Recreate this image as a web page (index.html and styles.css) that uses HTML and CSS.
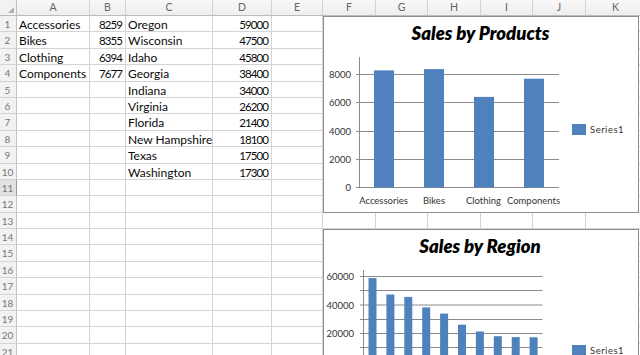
FILE: index.html
```html
<!DOCTYPE html>
<html>
<head>
<meta charset="utf-8">
<link rel="stylesheet" href="styles.css">
</head>
<body>
<div class="sheet">
  <div class="grid">
    <span class="corner"></span><span class="ch">A</span><span class="ch">B</span><span class="ch">C</span><span class="ch">D</span><span class="ch">E</span><span class="ch">F</span><span class="ch">G</span><span class="ch">H</span><span class="ch">I</span><span class="ch">J</span><span class="ch">K</span>
    <span class="rh">1</span><span>Accessories</span><span class="n">8259</span><span>Oregon</span><span class="n">59000</span><span></span><span></span><span></span><span></span><span></span><span></span><span></span>
    <span class="rh">2</span><span>Bikes</span><span class="n">8355</span><span>Wisconsin</span><span class="n">47500</span><span></span><span></span><span></span><span></span><span></span><span></span><span></span>
    <span class="rh">3</span><span>Clothing</span><span class="n">6394</span><span>Idaho</span><span class="n">45800</span><span></span><span></span><span></span><span></span><span></span><span></span><span></span>
    <span class="rh">4</span><span>Components</span><span class="n">7677</span><span>Georgia</span><span class="n">38400</span><span></span><span></span><span></span><span></span><span></span><span></span><span></span>
    <span class="rh">5</span><span></span><span></span><span>Indiana</span><span class="n">34000</span><span></span><span></span><span></span><span></span><span></span><span></span><span></span>
    <span class="rh">6</span><span></span><span></span><span>Virginia</span><span class="n">26200</span><span></span><span></span><span></span><span></span><span></span><span></span><span></span>
    <span class="rh">7</span><span></span><span></span><span>Florida</span><span class="n">21400</span><span></span><span></span><span></span><span></span><span></span><span></span><span></span>
    <span class="rh">8</span><span></span><span></span><span>New Hampshire</span><span class="n">18100</span><span></span><span></span><span></span><span></span><span></span><span></span><span></span>
    <span class="rh">9</span><span></span><span></span><span>Texas</span><span class="n">17500</span><span></span><span></span><span></span><span></span><span></span><span></span><span></span>
    <span class="rh">10</span><span></span><span></span><span>Washington</span><span class="n">17300</span><span></span><span></span><span></span><span></span><span></span><span></span><span></span>
    <span class="rh sel">11</span><span></span><span></span><span></span><span></span><span></span><span></span><span></span><span></span><span></span><span></span><span></span>
    <span class="rh">12</span><span></span><span></span><span></span><span></span><span></span><span></span><span></span><span></span><span></span><span></span><span></span>
    <span class="rh">13</span><span></span><span></span><span></span><span></span><span></span><span></span><span></span><span></span><span></span><span></span><span></span>
    <span class="rh">14</span><span></span><span></span><span></span><span></span><span></span><span></span><span></span><span></span><span></span><span></span><span></span>
    <span class="rh">15</span><span></span><span></span><span></span><span></span><span></span><span></span><span></span><span></span><span></span><span></span><span></span>
    <span class="rh">16</span><span></span><span></span><span></span><span></span><span></span><span></span><span></span><span></span><span></span><span></span><span></span>
    <span class="rh">17</span><span></span><span></span><span></span><span></span><span></span><span></span><span></span><span></span><span></span><span></span><span></span>
    <span class="rh">18</span><span></span><span></span><span></span><span></span><span></span><span></span><span></span><span></span><span></span><span></span><span></span>
    <span class="rh">19</span><span></span><span></span><span></span><span></span><span></span><span></span><span></span><span></span><span></span><span></span><span></span>
    <span class="rh">20</span><span></span><span></span><span></span><span></span><span></span><span></span><span></span><span></span><span></span><span></span><span></span>
    <span class="rh">21</span><span></span><span></span><span></span><span></span><span></span><span></span><span></span><span></span><span></span><span></span><span></span>
  </div>

  <div class="chart chart-products">
    <svg width="314" height="195" viewBox="1 1 314 195">
      <text class="title" x="157.5" y="23.5" text-anchor="middle">Sales by Products</text>
      <g class="gl">
        <line x1="36" y1="58.5" x2="236" y2="58.5"/>
        <line x1="36" y1="86.5" x2="236" y2="86.5"/>
        <line x1="36" y1="115.5" x2="236" y2="115.5"/>
        <line x1="36" y1="143.5" x2="236" y2="143.5"/>
        <line x1="33" y1="171.5" x2="236" y2="171.5"/>
        <line x1="36.5" y1="41" x2="36.5" y2="172"/>
        <line x1="33" y1="58.5" x2="36" y2="58.5"/>
        <line x1="33" y1="86.5" x2="36" y2="86.5"/>
        <line x1="33" y1="115.5" x2="36" y2="115.5"/>
        <line x1="33" y1="143.5" x2="36" y2="143.5"/>
      </g>
      <g class="bar">
        <rect x="51" y="54.4" width="20" height="117.1"/>
        <rect x="101" y="53.1" width="20" height="118.4"/>
        <rect x="151" y="80.9" width="20" height="90.6"/>
        <rect x="201" y="62.7" width="20" height="108.8"/>
      </g>
      <g class="ax" text-anchor="end">
        <text x="28" y="62">8000</text>
        <text x="28" y="90">6000</text>
        <text x="28" y="119">4000</text>
        <text x="28" y="147">2000</text>
        <text x="28" y="175">0</text>
      </g>
      <g class="ax" text-anchor="middle">
        <text x="60.5" y="187.5">Accessories</text>
        <text x="111" y="187.5">Bikes</text>
        <text x="160.5" y="187.5">Clothing</text>
        <text x="210.5" y="187.5">Components</text>
      </g>
      <rect class="bar" x="249" y="108" width="14" height="11"/>
      <text class="ax legend" x="267" y="116.5">Series1</text>
    </svg>
  </div>

  <div class="chart chart-region">
    <svg width="314" height="138" viewBox="1 1 314 138">
      <text class="title" x="157" y="23.5" text-anchor="middle">Sales by Region</text>
      <g class="gl">
        <line x1="40" y1="47.5" x2="219.5" y2="47.5"/>
        <line x1="40" y1="61.5" x2="219.5" y2="61.5"/>
        <line x1="40" y1="76" x2="219.5" y2="76"/>
        <line x1="40" y1="90.5" x2="219.5" y2="90.5"/>
        <line x1="40" y1="104.5" x2="219.5" y2="104.5"/>
        <line x1="40" y1="118.5" x2="219.5" y2="118.5"/>
        <line x1="37" y1="132.5" x2="219.5" y2="132.5"/>
        <line x1="40.5" y1="41" x2="40.5" y2="140"/>
        <line x1="37" y1="47.5" x2="40" y2="47.5"/>
        <line x1="37" y1="61.5" x2="40" y2="61.5"/>
        <line x1="37" y1="76" x2="40" y2="76"/>
        <line x1="37" y1="90.5" x2="40" y2="90.5"/>
        <line x1="37" y1="104.5" x2="40" y2="104.5"/>
        <line x1="37" y1="118.5" x2="40" y2="118.5"/>
      </g>
      <g class="bar">
        <rect x="45.5" y="49.1" width="8" height="90"/>
        <rect x="63.4" y="65.5" width="8" height="80"/>
        <rect x="81.3" y="67.9" width="8" height="80"/>
        <rect x="99.2" y="78.4" width="8" height="70"/>
        <rect x="117.1" y="84.6" width="8" height="60"/>
        <rect x="135" y="95.7" width="8" height="50"/>
        <rect x="152.9" y="102.5" width="8" height="40"/>
        <rect x="170.8" y="107.2" width="8" height="40"/>
        <rect x="188.7" y="108.1" width="8" height="40"/>
        <rect x="206.6" y="108.3" width="8" height="40"/>
      </g>
      <g class="ax" text-anchor="end">
        <text x="31" y="51">60000</text>
        <text x="31" y="79.5">40000</text>
        <text x="31" y="108">20000</text>
      </g>
      <rect class="bar" x="249" y="116" width="14" height="11"/>
      <text class="ax legend" x="267" y="124.5">Series1</text>
    </svg>
  </div>
</div>
</body>
</html>
```
FILE: styles.css
```css
* { box-sizing: border-box; }
html, body { margin: 0; padding: 0; background: #fff; overflow: hidden; }
body { font-family: Lato, "Noto Sans", sans-serif; font-size: 12px; color: #0a0a0a; }

.sheet { position: relative; width: 640px; height: 355px; overflow: hidden; }

.grid {
  display: grid;
  grid-template-columns: 17px 73px 36px 87px 59px 51px 53px 52px 53px 52px 53px 60px;
  grid-template-rows: 16px;
  grid-auto-rows: 16.4px;
}
.grid > span {
  border-right: 1px solid #d4d4d4;
  border-bottom: 1px solid #d4d4d4;
  padding: 1px 2px 0;
  line-height: 15px;
  white-space: nowrap;
  overflow: hidden;
}
.grid > span.n {
  text-align: right;
  font-size: 11.5px;
  letter-spacing: -0.9px;
  padding-right: 3px;
}

.grid > span.corner {
  background: #f2f2f2;
  border-right: 1px solid #c2c2c2;
  border-bottom: 1px solid #bcbcbc;
  display: flex;
  align-items: flex-end;
  justify-content: flex-end;
  padding: 0 2px 2px 0;
}
.corner::after {
  content: "";
  width: 6px;
  height: 6px;
  background: #b0b0b0;
  clip-path: polygon(100% 0, 100% 100%, 0 100%);
}

.grid > span.ch {
  background: linear-gradient(#f8f8f8, #eeeeee);
  border-right: 1px solid #d3d3d3;
  border-bottom: 1px solid #bcbcbc;
  text-align: center;
  color: #666;
  font-size: 10.5px;
  line-height: 15px;
  padding: 0;
}

.grid > span.rh {
  background: #f2f2f2;
  border-right: 1px solid #c2c2c2;
  border-bottom: 1px solid #d4d4d4;
  text-align: center;
  color: #777;
  font-size: 10px;
  line-height: 16px;
  padding: 0 1px 0 0;
}
.grid > span.rh.sel {
  background: #e2e2e2;
  border-right-color: #9a9a9a;
}

.chart {
  position: absolute;
  left: 323px;
  width: 316px;
  background: #fff;
  border: 1px solid #8e8e8e;
  overflow: hidden;
}
.chart svg { display: block; }
.chart-products { top: 16px; height: 197px; }
.chart-region { top: 229px; height: 140px; }

.title { font-family: Lato, sans-serif; font-weight: 800; font-style: italic; font-size: 18.5px; fill: #000; }
.gl line { stroke: #8a8a8a; stroke-width: 1; }
.bar, .bar rect { fill: #4f81bd; }
.ax { font-family: Lato, sans-serif; font-size: 9.5px; fill: #333; }
.ax.legend { letter-spacing: 0.5px; }
```
